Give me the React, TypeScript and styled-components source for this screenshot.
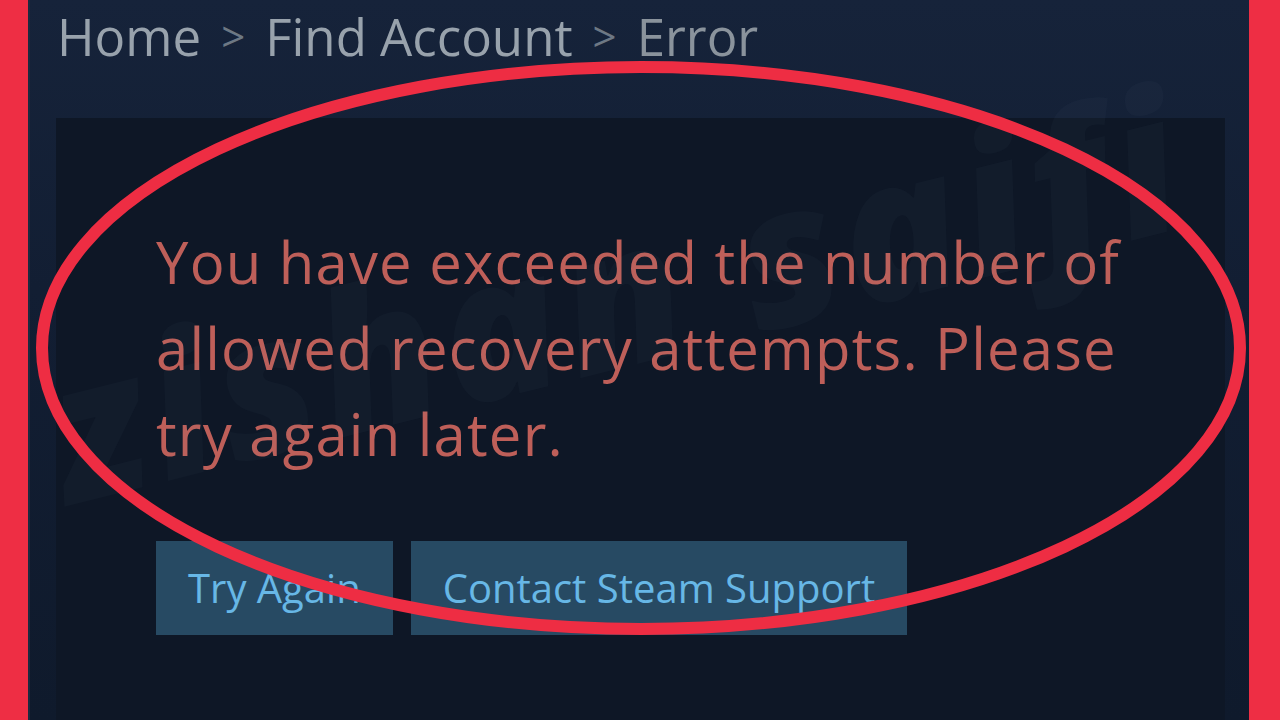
import React from "react";
import styled, { createGlobalStyle } from "styled-components";

const Global = createGlobalStyle`
  html, body { margin: 0; padding: 0; background: #0f1a2b; }
  body { width: 1280px; height: 720px; overflow: hidden; font-family: "Open Sans", "Noto Sans", sans-serif; }
  #root { width: 1280px; height: 720px; }
`;

const Page = styled.div`
  position: relative;
  width: 1280px;
  height: 720px;
  display: flex;
  overflow: hidden;
`;

const RedBar = styled.div<{ $w: number }>`
  width: ${(p) => p.$w}px;
  flex: none;
  background: #ee2e44;
`;

const Main = styled.main`
  flex: 1;
  display: flex;
  flex-direction: column;
  background: linear-gradient(180deg, #16233a 0%, #121e33 40%, #0f1a2c 100%);
  border-left: 2px solid #1a2a40;
  padding: 0 24px 0 26px;
  min-width: 0;
`;

const Breadcrumb = styled.nav`
  height: 90px;
  display: flex;
  align-items: flex-start;
  gap: 20px;
  padding: 0 0 0 1px;
  font-size: 51px;
  font-weight: 400;
  line-height: 72px;
  color: #929da8;
  white-space: nowrap;
`;

const Crumb = styled.span<{ $dim?: boolean }>`
  color: ${(p) => (p.$dim ? "#8a939c" : "#98a2ac")};
`;

const Sep = styled.span`
  color: #6d7884;
  font-size: 42px;
`;

const Panel = styled.section`
  margin-top: 28px;
  flex: 1;
  background: #0e1726;
  padding: 101px 60px 0 100px;
  display: flex;
  flex-direction: column;
`;

const ErrorText = styled.p`
  margin: 0;
  font-size: 58px;
  font-weight: 400;
  letter-spacing: 1.2px;
  line-height: 86px;
  color: #be5f59;
  max-width: 1010px;
`;

const Buttons = styled.div`
  margin-top: 64px;
  display: flex;
  gap: 18px;
`;

const Button = styled.button`
  height: 94px;
  padding: 0 32px;
  border: none;
  border-radius: 0;
  background: #274a63;
  color: #67b7e6;
  font-family: "Open Sans", "Noto Sans", sans-serif;
  font-size: 40px;
  font-weight: 400;
  line-height: 1;
  cursor: pointer;
`;

const Watermark = styled.div`
  position: absolute;
  left: 50px;
  top: 300px;
  font-family: "Open Sans", sans-serif;
  font-weight: 800;
  font-style: italic;
  font-size: 195px;
  letter-spacing: 6px;
  color: rgba(120, 150, 190, 0.04);
  transform: rotate(-14deg);
  transform-origin: left center;
  white-space: nowrap;
  pointer-events: none;
`;

const Overlay = styled.svg`
  position: absolute;
  inset: 0;
  pointer-events: none;
`;

export default function App() {
  return (
    <>
      <Global />
      <Page>
        <RedBar $w={28} />
        <Main>
          <Breadcrumb>
            <Crumb>Home</Crumb>
            <Sep>&gt;</Sep>
            <Crumb>Find Account</Crumb>
            <Sep>&gt;</Sep>
            <Crumb $dim>Error</Crumb>
          </Breadcrumb>
          <Panel>
            <ErrorText>
              You have exceeded the number of allowed recovery attempts. Please
              try again later.
            </ErrorText>
            <Buttons>
              <Button>Try Again</Button>
              <Button>Contact Steam Support</Button>
            </Buttons>
          </Panel>
        </Main>
        <RedBar $w={31} />
        <Watermark>zishan saifi</Watermark>
        <Overlay width="1280" height="720" viewBox="0 0 1280 720">
          <ellipse cx="641" cy="348" rx="599" ry="281" fill="none" stroke="#ee2d43" strokeWidth="12" />
        </Overlay>
      </Page>
    </>
  );
}
